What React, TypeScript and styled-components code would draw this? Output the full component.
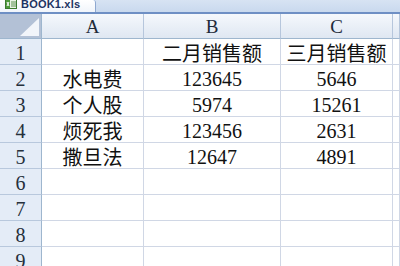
import styled, { createGlobalStyle } from "styled-components"

const GlobalStyle = createGlobalStyle`
    html, body {
        margin : 0;
        padding : 0;
        background : #ffffff;
        overflow : hidden;
    }
`

const columns = [
    { key: 'A', width: 102 },
    { key: 'B', width: 137 },
    { key: 'C', width: 112 },
]

const rows: string[][] = [
    ['', '二月销售额', '三月销售额'],
    ['水电费', '123645', '5646'],
    ['个人股', '5974', '15261'],
    ['烦死我', '123456', '2631'],
    ['撒旦法', '12647', '4891'],
    ['', '', ''],
    ['', '', ''],
    ['', '', ''],
    ['', '', ''],
]

function App() {
    return (
        <>
            <GlobalStyle />
            <Page>
                <TabBar>
                    <Tab>
                        <XlsIcon width="12" height="10" viewBox="0 0 12 10">
                            <rect x="0.5" y="0.5" width="11" height="9" fill="#e9f3e4" stroke="#3b7a2e" />
                            <rect x="1" y="1" width="4" height="8" fill="#4f9a3c" />
                            <path d="M2 3 L4 7 M4 3 L2 7" stroke="#ffffff" strokeWidth="1" />
                            <path d="M6 3 H11 M6 5 H11 M6 7 H11" stroke="#3b7a2e" strokeWidth="0.8" />
                        </XlsIcon>
                        <TabLabel>BOOK1.xls</TabLabel>
                    </Tab>
                </TabBar>
                <Sheet>
                    <Corner>
                        <CornerTriangle />
                    </Corner>
                    {columns.map(col => (
                        <ColHeader key={col.key} style={{ width: col.width }}>{col.key}</ColHeader>
                    ))}
                    <ColHeader $rest />
                    {rows.map((row, idx) => (
                        <Row key={idx}>
                            <RowHeader>{idx + 1}</RowHeader>
                            {row.map((value, cIdx) => (
                                <Cell key={cIdx} style={{ width: columns[cIdx].width }} $cjk={/[^\d]/.test(value)}>
                                    {value}
                                </Cell>
                            ))}
                            <Cell $rest />
                        </Row>
                    ))}
                </Sheet>
            </Page>
        </>
    )
}

export default App


const Page = styled.div`
    width : 400px;
    height : 266px;
    overflow : hidden;
    display : flex;
    flex-direction : column;
    background : #ffffff;
`

const TabBar = styled.div`
    height : 12px;
    flex-shrink : 0;
    display : flex;
    align-items : flex-end;
    background : linear-gradient(#d7e3f3, #c9d9ee);
    border-bottom : 2px solid #6e8fc4;
    overflow : hidden;
`

const Tab = styled.div`
    width : 96px;
    height : 14px;
    margin-bottom : -2px;
    display : flex;
    align-items : center;
    gap : 4px;
    padding-left : 5px;
    background : linear-gradient(#ffffff, #eef3fa);
    border-right : 1px solid #8ea8d0;
    border-top-right-radius : 3px;
    box-sizing : border-box;
    overflow : hidden;
`

const XlsIcon = styled.svg`
    margin-top : -6px;
    flex-shrink : 0;
`

const TabLabel = styled.span`
    margin-top : -7px;
    font-family : "Liberation Sans", Arial, sans-serif;
    font-size : 11px;
    font-weight : 700;
    color : #1d3363;
    letter-spacing : 0.2px;
`

const Sheet = styled.div`
    display : flex;
    flex-wrap : wrap;
    width : 400px;
`

const Corner = styled.div`
    position : relative;
    width : 42px;
    height : 25px;
    box-sizing : border-box;
    background : #b3c1d6;
    border-right : 1px solid #9eb6ce;
    border-bottom : 1px solid #9eb6ce;
`

const CornerTriangle = styled.div`
    position : absolute;
    right : 2px;
    bottom : 2px;
    width : 0;
    height : 0;
    border-left : 19px solid transparent;
    border-bottom : 18px solid #f2f5fa;
`

const ColHeader = styled.div<{ $rest?: boolean }>`
    height : 25px;
    ${p => p.$rest ? 'flex : 1;' : ''}
    box-sizing : border-box;
    display : flex;
    align-items : center;
    justify-content : center;
    padding-top : 2px;
    background : linear-gradient(#f5f8fc, #dfe7f2);
    border-right : 1px solid #b6c6dc;
    border-bottom : 1px solid #9eb6ce;
    font-family : "Liberation Serif", "Times New Roman", serif;
    font-size : 19px;
    color : #1f2b3a;
`

const Row = styled.div`
    display : flex;
    width : 400px;
    height : 26px;
`

const RowHeader = styled.div`
    width : 42px;
    height : 26px;
    box-sizing : border-box;
    display : flex;
    align-items : center;
    justify-content : center;
    padding-top : 3px;
    background : #e4ecf7;
    border-right : 1px solid #9eb6ce;
    border-bottom : 1px solid #b8c8dd;
    font-family : "Liberation Serif", "Times New Roman", serif;
    font-size : 20px;
    color : #26303c;
`

const Cell = styled.div<{ $rest?: boolean; $cjk?: boolean }>`
    height : 26px;
    ${p => p.$rest ? 'flex : 1;' : ''}
    box-sizing : border-box;
    display : flex;
    align-items : center;
    justify-content : center;
    padding-top : ${p => p.$cjk ? '1px' : '4px'};
    border-right : 1px solid #d0d7e5;
    border-bottom : 1px solid #d0d7e5;
    font-family : "Liberation Serif", "Noto Sans CJK SC", serif;
    font-size : 20px;
    font-weight : 400;
    color : #111111;
    white-space : nowrap;
    overflow : hidden;
`
